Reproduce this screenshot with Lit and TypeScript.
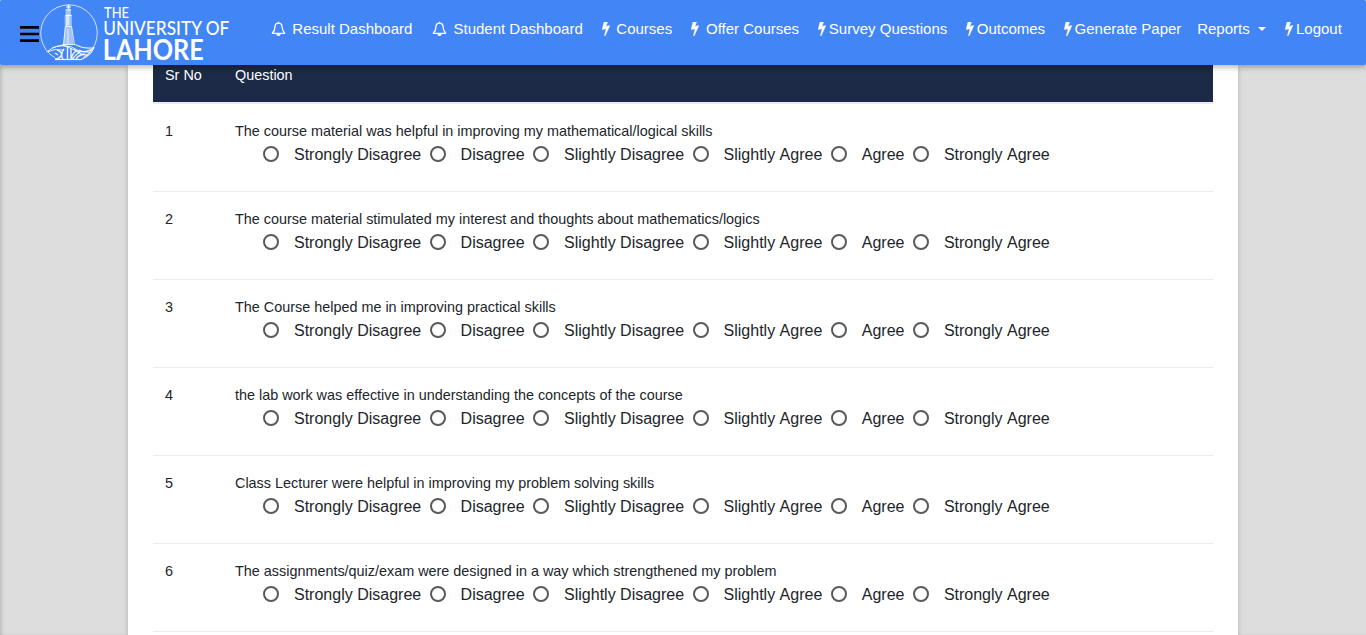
import { LitElement, html, css, svg } from "lit";
import { customElement } from "lit/decorators.js";

const bell = html`<svg class="bell" viewBox="0 0 15 16"><path d="M7.500 .7v1.500M1.300 12.300h12.400c-1.700-1.700-2.600-3.500-2.700-6.700C10.900 3.400 9.700 2.200 7.500 2.200S4.100 3.400 4 5.600c-.1 3.200-1 5-2.700 6.700z" fill="none" stroke="#fff" stroke-width="1.300" stroke-linejoin="round"/><path d="M5.300 12.800h4.400a2.200 2.200 0 0 1-4.400 0z"/></svg>`;
const bolt = html`<svg class="bolt" viewBox="448 128 896 1664"><path stroke="#fff" stroke-width="50" d="M1333 566q18 20 7 44l-540 1157q-13 25-42 25-4 0-14-2-17-5-25.500-19t-4.500-30l197-808-406 101q-4 1-12 1-18 0-31-11-18-15-13-39l201-825q4-14 16-23t28-9h328q19 0 32 12.500t13 29.500q0 8-5 18l-171 463 396-98q8-2 12-2 19 0 34 15z"/></svg>`;

const emblem = svg`
  <path d="M15 57.700A28.300 28.300 0 1 1 43 57.700" fill="none" stroke="#fff" stroke-width="1" opacity="0.750"/>
  <path d="M27.200 5h2.600v4h1.400l-.4 4 1 3v11l1.700 18h-10.500l1.700-18V16l1-3-.4-4h1.900z" fill="#fff" opacity="0.500"/>
  <g fill="none" stroke="#fff">
    <path d="M28.500 4.500v4M26 7h5M26.500 10h4.500M25.500 15.500h6.200M25.500 26.500h6.200" stroke-width="1.100" opacity="0.850"/>
    <path d="M26.800 15v11M28.500 14v11" stroke-width="1.500" opacity="0.650"/>
    <path d="M25.500 27L23.500 45M28 29v15M31.700 27l2.800 18M22 44.500h14" stroke-width="0.900" opacity="0.850"/>
    <path d="M8 51q8-6 16-5.500t13 4.500q8 4 17-2.500M12 48q11-5 20 1 9 5 20 1M6.500 52q9-4 17-2" stroke-width="1" opacity="0.850"/>
    <path d="M36 45q9 4.500 18 2.500-3 8-13 12M39 50q5 3 11 2M34 49q8 7 14 6" stroke-width="1.100" opacity="0.850"/>
    <path d="M17 50q6 2 4 6-2 3-6 3M24 49q-4 5-1 10.500M27.500 46v13M31 48v11M36 51q-5 4-4 8M40 52q-6 4-7 7M45 54q-7 1-9 5M15 53l3 2" stroke-width="1.400" opacity="0.900"/>
    <path d="M15 59.500h27" stroke-width="1.200" opacity="0.900"/>
  </g>`;

const navItems = [
  { icon: bell, text: "Result Dashboard", cls: "a" },
  { icon: bell, text: "Student Dashboard", cls: "b" },
  { icon: bolt, text: "Courses", cls: "c" },
  { icon: bolt, text: "Offer Courses", cls: "d" },
  { icon: bolt, text: "Survey Questions", cls: "e" },
  { icon: bolt, text: "Outcomes", cls: "f" },
  { icon: bolt, text: "Generate Paper", cls: "f" },
  { icon: null, text: "Reports", cls: "g" },
  { icon: bolt, text: "Logout", cls: "h" },
];

const questions = [
  "The course material was helpful in improving my mathematical/logical skills",
  "The course material stimulated my interest and thoughts about mathematics/logics",
  "The Course helped me in improving practical skills",
  "the lab work was effective in understanding the concepts of the course",
  "Class Lecturer were helpful in improving my problem solving skills",
  "The assignments/quiz/exam were designed in a way which strengthened my problem",
];
const options = ["Strongly Disagree", "Disagree", "Slightly Disagree", "Slightly Agree", "Agree", "Strongly Agree"];

@customElement("top-nav")
export class TopNav extends LitElement {
  static styles = css`
    :host { display: block; position: relative; z-index: 1; }
    .bar {
      box-sizing: border-box; height: 65px; background: #4285f4; border-radius: 2px;
      box-shadow: 0 2px 5px rgba(0,0,0,.2), 0 2px 8px rgba(0,0,0,.12);
      display: flex; align-items: flex-start; padding-left: 20px; color: #fff;
      font: 15px/22px "Liberation Sans", Arial, sans-serif;
    }
    .burger { width: 19px; height: 16px; margin-top: 26px; flex: none; }
    .emblem { width: 58px; height: 65px; margin-left: 1px; flex: none; }
    .name { width: 132px; height: 65px; margin-left: 4px; flex: none; overflow: visible; }
    .name text { fill: #fff; font-family: Lato, sans-serif; }
    .menu { display: flex; margin-left: 36.500px; padding-top: 18px; }
    .item { display: flex; align-items: flex-start; white-space: nowrap; }
    .bell { width: 15px; height: 16px; fill: #fff; margin: 2.500px 6.800px 0 0; }
    .bolt { width: 8px; height: 14px; fill: #fff; margin: 4px 3px 0 0; }
    .a { margin-right: 19.300px; }
    .b { margin-right: 19px; }
    .c { margin-right: 19.200px; }
    .c .bolt, .d .bolt { margin-right: 6.600px; }
    .d { margin-right: 18.800px; }
    .e, .f { margin-right: 18.500px; }
    .f + .g { margin-left: -2.700px; }
    .g { margin-right: 18.800px; }
    .caret { margin: 9px 0 0 8.500px; border: 4.500px solid transparent; border-top-color: #fff; border-bottom: 0; }
  `;
  render() {
    return html`<nav class="bar">
      <svg class="burger" viewBox="0 0 19 16"><path d="M0 0h19v2.700H0zM0 6.700h19v2.600H0zM0 13.300h19V16H0z"/></svg>
      <svg class="emblem" viewBox="0 0 58 65">${emblem}</svg>
      <svg class="name" viewBox="0 0 132 65">
        <text x="2" y="18" font-size="15.500" font-weight="500" textLength="25" lengthAdjust="spacingAndGlyphs">THE</text>
        <text x="1.300" y="35.300" font-size="20" font-weight="500" textLength="126" lengthAdjust="spacingAndGlyphs">UNIVERSITY OF</text>
        <text x="0.800" y="59.800" font-size="28" font-weight="700" textLength="101" lengthAdjust="spacingAndGlyphs">LAHORE</text>
      </svg>
      <div class="menu">${navItems.map((n) => html`<div class="item ${n.cls}">${n.icon}<span>${n.text}</span>${n.icon ? "" : html`<i class="caret"></i>`}</div>`)}</div>
    </nav>`;
  }
}

@customElement("app-root")
export class AppRoot extends LitElement {
  static styles = css`
    :host { display: block; height: 635px; overflow: hidden; background: #ddd; color: #212529; font-family: "Liberation Sans", Arial, sans-serif; }
    .page { height: 570px; box-shadow: inset 3px 0 4px -2px rgba(0,0,0,.2); display: flex; justify-content: center; }
    .card { box-sizing: border-box; width: 1110px; height: 570px; background: #fff; padding: 0 25px; box-shadow: 0 2px 5px rgba(0,0,0,.2); }
    .row { display: grid; grid-template-columns: 70px 1fr; padding: 0 12px; box-sizing: border-box; }
    .head { height: 39px; background: #1c2a48; background-clip: padding-box; border-bottom: 2px solid #e9ecef; color: #fff; font-size: 14.400px; line-height: 20px; }
    .question { height: 88px; border-bottom: 1px solid #e9ecef; padding-top: 17px; font-size: 14.400px; line-height: 20px; }
    .options { display: flex; gap: 4.450px; padding-left: 24px; margin-top: 1px; font-size: 16px; line-height: 25px; font-kerning: none; }
    .option { display: flex; align-items: flex-start; padding-left: 4px; white-space: nowrap; }
    .radio { box-sizing: border-box; width: 16px; height: 16px; border: 2px solid #5a5a5a; border-radius: 50%; margin: 4px 15px 0 0; }
  `;
  render() {
    return html`<top-nav></top-nav>
      <main class="page"><section class="card">
        <div class="row head"><span>Sr No</span><span>Question</span></div>
        ${questions.map((q, i) => html`<div class="row question"><span>${i + 1}</span><div>
          <div>${q}</div>
          <div class="options">${options.map((o) => html`<label class="option"><i class="radio"></i>${o}</label>`)}</div>
        </div></div>`)}
      </section></main>`;
  }
}
